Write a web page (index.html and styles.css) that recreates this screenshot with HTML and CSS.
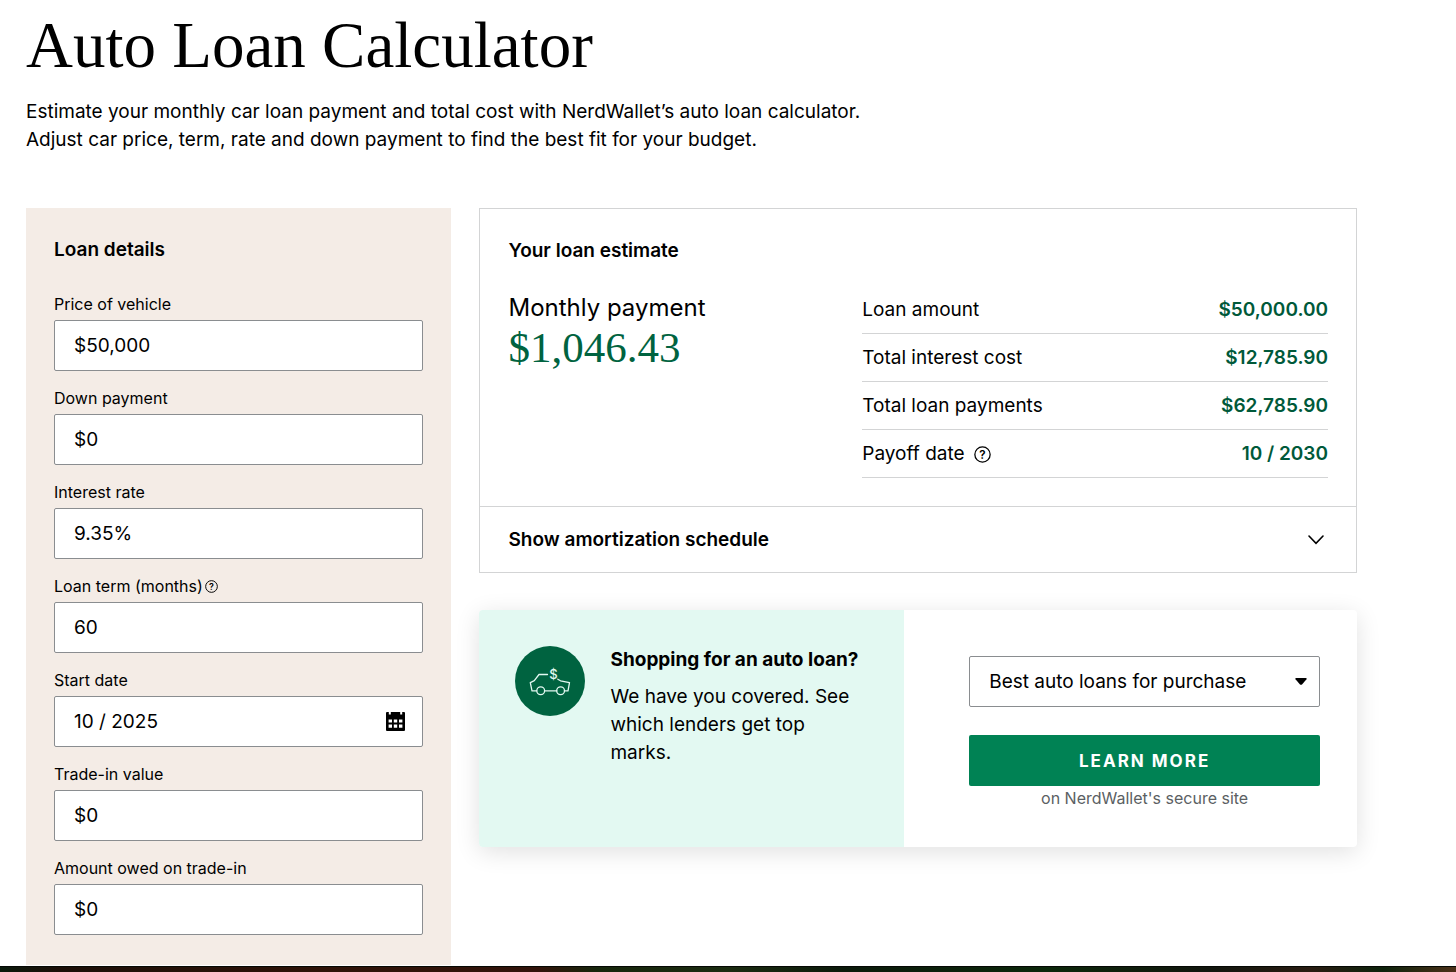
FILE: index.html
```html
<!DOCTYPE html>
<html lang="en">
<head>
<meta charset="utf-8">
<meta name="viewport" content="width=device-width, initial-scale=1">
<title>Auto Loan Calculator</title>
<link rel="stylesheet" href="styles.css">
</head>
<body>
<main class="page">
  <header class="intro">
    <h1 class="title">Auto Loan Calculator</h1>
    <p class="lead">Estimate your monthly car loan payment and total cost with NerdWallet’s auto loan calculator. Adjust car price, term, rate and down payment to find the best fit for your budget.</p>
  </header>

  <div class="columns">
    <form class="details">
      <h2 class="heading">Loan details</h2>
      <div class="field">
        <label class="label" for="price">Price of vehicle</label>
        <input class="control" id="price" type="text" value="$50,000">
      </div>
      <div class="field">
        <label class="label" for="down">Down payment</label>
        <input class="control" id="down" type="text" value="$0">
      </div>
      <div class="field">
        <label class="label" for="rate">Interest rate</label>
        <input class="control" id="rate" type="text" value="9.35%">
      </div>
      <div class="field">
        <div class="label-row">
          <label class="label" for="term">Loan term (months)</label>
          <button class="help" type="button" aria-label="About loan term">
            <svg class="help-icon" viewBox="0 0 16 16"><circle cx="8" cy="8" r="7.2"/><text x="8" y="12">?</text></svg>
          </button>
        </div>
        <input class="control" id="term" type="text" value="60">
      </div>
      <div class="field">
        <label class="label" for="start">Start date</label>
        <div class="control-wrap">
          <input class="control" id="start" type="text" value="10 / 2025">
          <svg class="calendar" viewBox="0 0 19 19" aria-hidden="true">
            <path fill-rule="evenodd" d="M1 0h1.8v2.6h2V0h9.4v2.6h2V0H18a1 1 0 0 1 1 1v17a1 1 0 0 1-1 1H1a1 1 0 0 1-1-1V1a1 1 0 0 1 1-1zM2.6 7.4v3.2h3.4V7.4zM7.8 7.4v3.2h3.4V7.4zM13 7.4v3.2h3.4V7.4zM2.6 12.6v3.2h3.4v-3.2zM7.8 12.6v3.2h3.4v-3.2zM13 12.6v3.2h3.4v-3.2z"/>
          </svg>
        </div>
      </div>
      <div class="field">
        <label class="label" for="trade">Trade-in value</label>
        <input class="control" id="trade" type="text" value="$0">
      </div>
      <div class="field">
        <label class="label" for="owed">Amount owed on trade-in</label>
        <input class="control" id="owed" type="text" value="$0">
      </div>
    </form>

    <div class="results">
      <section class="estimate">
        <div class="summary">
          <h2 class="heading">Your loan estimate</h2>
          <div class="figures">
            <div class="monthly">
              <p class="monthly-label">Monthly payment</p>
              <p class="monthly-value">$1,046.43</p>
            </div>
            <table class="totals">
              <tbody>
                <tr><th scope="row">Loan amount</th><td>$50,000.00</td></tr>
                <tr><th scope="row">Total interest cost</th><td>$12,785.90</td></tr>
                <tr><th scope="row">Total loan payments</th><td>$62,785.90</td></tr>
                <tr>
                  <th scope="row">
                    <span class="with-help">Payoff date
                      <button class="help help-large" type="button" aria-label="About payoff date">
                        <svg class="help-icon" viewBox="0 0 16 16"><circle cx="8" cy="8" r="7.2"/><text x="8" y="12">?</text></svg>
                      </button>
                    </span>
                  </th>
                  <td>10 / 2030</td>
                </tr>
              </tbody>
            </table>
          </div>
        </div>
        <button class="schedule" type="button">
          <span>Show amortization schedule</span>
          <svg class="chevron" viewBox="0 0 16 10" aria-hidden="true"><path d="M1 1l7 7.4L15 1"/></svg>
        </button>
      </section>

      <section class="promo">
        <div class="pitch">
          <svg class="car" viewBox="0 0 70 70" aria-hidden="true">
            <circle class="car-disc" cx="35" cy="35" r="35"/>
            <g class="car-lines">
              <path d="M32.500 28.500H24l-4.700 6.200L15.300 36.600l1.700 8.200h4.600M29.600 44.800h12.200M49.400 44.800h3.600l1.500-8.200L45.500 34.800l-2.700-1.600"/>
              <circle cx="25.700" cy="44.800" r="3.900"/>
              <circle cx="45.600" cy="44.800" r="3.900"/>
            </g>
            <text class="car-dollar" x="38.500" y="33">$</text>
          </svg>
          <div>
            <h2 class="pitch-title">Shopping for an auto loan?</h2>
            <p class="pitch-text">We have you covered. See which lenders get top marks.</p>
          </div>
        </div>
        <div class="action">
          <div class="control-wrap">
            <select class="control select" aria-label="Loan type">
              <option>Best auto loans for purchase</option>
            </select>
            <svg class="caret" viewBox="0 0 12 7" aria-hidden="true"><path d="M1 0h10q1 .3.500 1.200L7 6.400q-1 .8-2 0L.500 1.200Q0 .3 1 0z"/></svg>
          </div>
          <button class="learn" type="button">LEARN MORE</button>
          <p class="note">on NerdWallet's secure site</p>
        </div>
      </section>
    </div>
  </div>
</main>
<footer class="photo-strip"></footer>
</body>
</html>
```
FILE: styles.css
```css
* { box-sizing: border-box; }

body {
  margin: 0;
  background: #fff;
  color: #000;
  font-family: Inter, "Liberation Sans", sans-serif;
  font-size: 19px;
  line-height: 28px;
}

h1, h2, p { margin: 0; }

button, input, select { font: inherit; color: inherit; }

.page { padding: 11px 99px 0 26px; }

.intro { margin-bottom: 54px; }

.title {
  margin-bottom: 19px;
  font-family: "Liberation Serif", serif;
  font-size: 65px;
  font-weight: 400;
  line-height: 68px;
}

.lead { max-width: 890px; }

.columns {
  display: grid;
  grid-template-columns: 16fr 33fr;
  gap: 28px;
}

.heading { font-size: 19px; font-weight: 600; line-height: 28px; }

.details {
  display: flex;
  flex-direction: column;
  gap: 15px;
  padding: 28px 28px 30px;
  background: #f4ece6;
}

.details .heading { margin-bottom: 13px; }

.field { display: flex; flex-direction: column; gap: 4px; }

.label { font-size: 16px; line-height: 24px; }

.label-row { display: flex; align-items: center; gap: 2px; }

.control {
  display: block;
  width: 100%;
  height: 51px;
  padding: 0 19px;
  border: 1px solid #8a8d90;
  border-radius: 2px;
  background: #fff;
}

.control-wrap { position: relative; }

.calendar {
  position: absolute;
  top: 16px;
  right: 18px;
  width: 19px;
  height: 19px;
}

.help {
  display: inline-flex;
  width: 13px;
  height: 13px;
  padding: 0;
  border: 0;
  background: none;
}

.help-large { width: 17px; height: 17px; }

.help-icon { width: 100%; height: 100%; overflow: visible; }
.help-icon circle { fill: none; stroke: #000; stroke-width: 1.2; }
.help-icon text { font-size: 11px; font-weight: 600; text-anchor: middle; }

.results { display: flex; flex-direction: column; gap: 37px; }

.estimate { border: 1px solid #d3d4d5; }

.summary { padding: 28px; }

.figures {
  display: grid;
  grid-template-columns: 326fr 466fr;
  gap: 28px;
  margin-top: 21px;
}

.monthly { padding-top: 6px; }
.monthly-label { font-size: 24px; line-height: 32px; }

.monthly-value {
  color: #006340;
  font-family: "Liberation Serif", serif;
  font-size: 43px;
  line-height: 48px;
}

.totals { width: 100%; border-collapse: collapse; }

.totals th, .totals td {
  padding: 10px 0 9px;
  border-bottom: 1px solid #d3d4d5;
}

.totals th { font-weight: 400; text-align: left; }
.totals td { color: #00593a; font-weight: 600; text-align: right; }

.with-help { display: flex; align-items: center; gap: 9px; }

.schedule {
  display: flex;
  align-items: center;
  justify-content: space-between;
  width: 100%;
  padding: 19px 32px 18px 28px;
  border: 0;
  border-top: 1px solid #d3d4d5;
  background: none;
  font-weight: 600;
}

.chevron { width: 16px; height: 10px; fill: none; stroke: #000; stroke-width: 1.6; stroke-linecap: round; }

.promo {
  display: grid;
  grid-template-columns: 425fr 453fr;
  min-height: 237px;
  border-radius: 4px;
  background: #fff;
  box-shadow: 0 5px 24px rgba(0, 0, 0, 0.12);
}

.pitch {
  display: flex;
  gap: 25px;
  padding: 36px;
  border-radius: 4px 0 0 4px;
  background: #e3f9f2;
}

.car { flex: none; width: 70px; height: 70px; }
.car-disc { fill: #006340; }
.car-lines { fill: none; stroke: #e3f9f2; stroke-width: 1.300; stroke-linejoin: round; stroke-linecap: round; }
.car-dollar { fill: #e3f9f2; font-size: 13px; font-weight: 500; text-anchor: middle; }

.pitch-title { margin-bottom: 9px; font-size: 19px; font-weight: 700; line-height: 28px; }

.action { padding: 46px 37px 36px 65px; }

.select { padding-right: 44px; appearance: none; }

.caret {
  position: absolute;
  top: 22px;
  right: 13px;
  width: 12px;
  height: 7px;
  pointer-events: none;
}

.learn {
  display: block;
  width: 100%;
  height: 51px;
  margin-top: 28px;
  border: 0;
  border-radius: 2px;
  background: #008254;
  color: #fff;
  font-size: 17px;
  font-weight: 700;
  letter-spacing: 2px;
}

.note { color: #5b5f63; font-size: 16px; line-height: 24px; text-align: center; }

.photo-strip {
  height: 6px;
  margin-top: 1px;
  border-top: 1px solid #050804;
  background: linear-gradient(90deg, #0b1a0c 0, #1c0f08 4%, #2f1308 22%, #32130a 37%, #17260c 41%, #1b2b10 50%, #0c1a0b 58%, #0c270a 72%, #12160e 83%, #2a1c12 90%, #0d230c 95%, #4d3018 100%);
}
```
